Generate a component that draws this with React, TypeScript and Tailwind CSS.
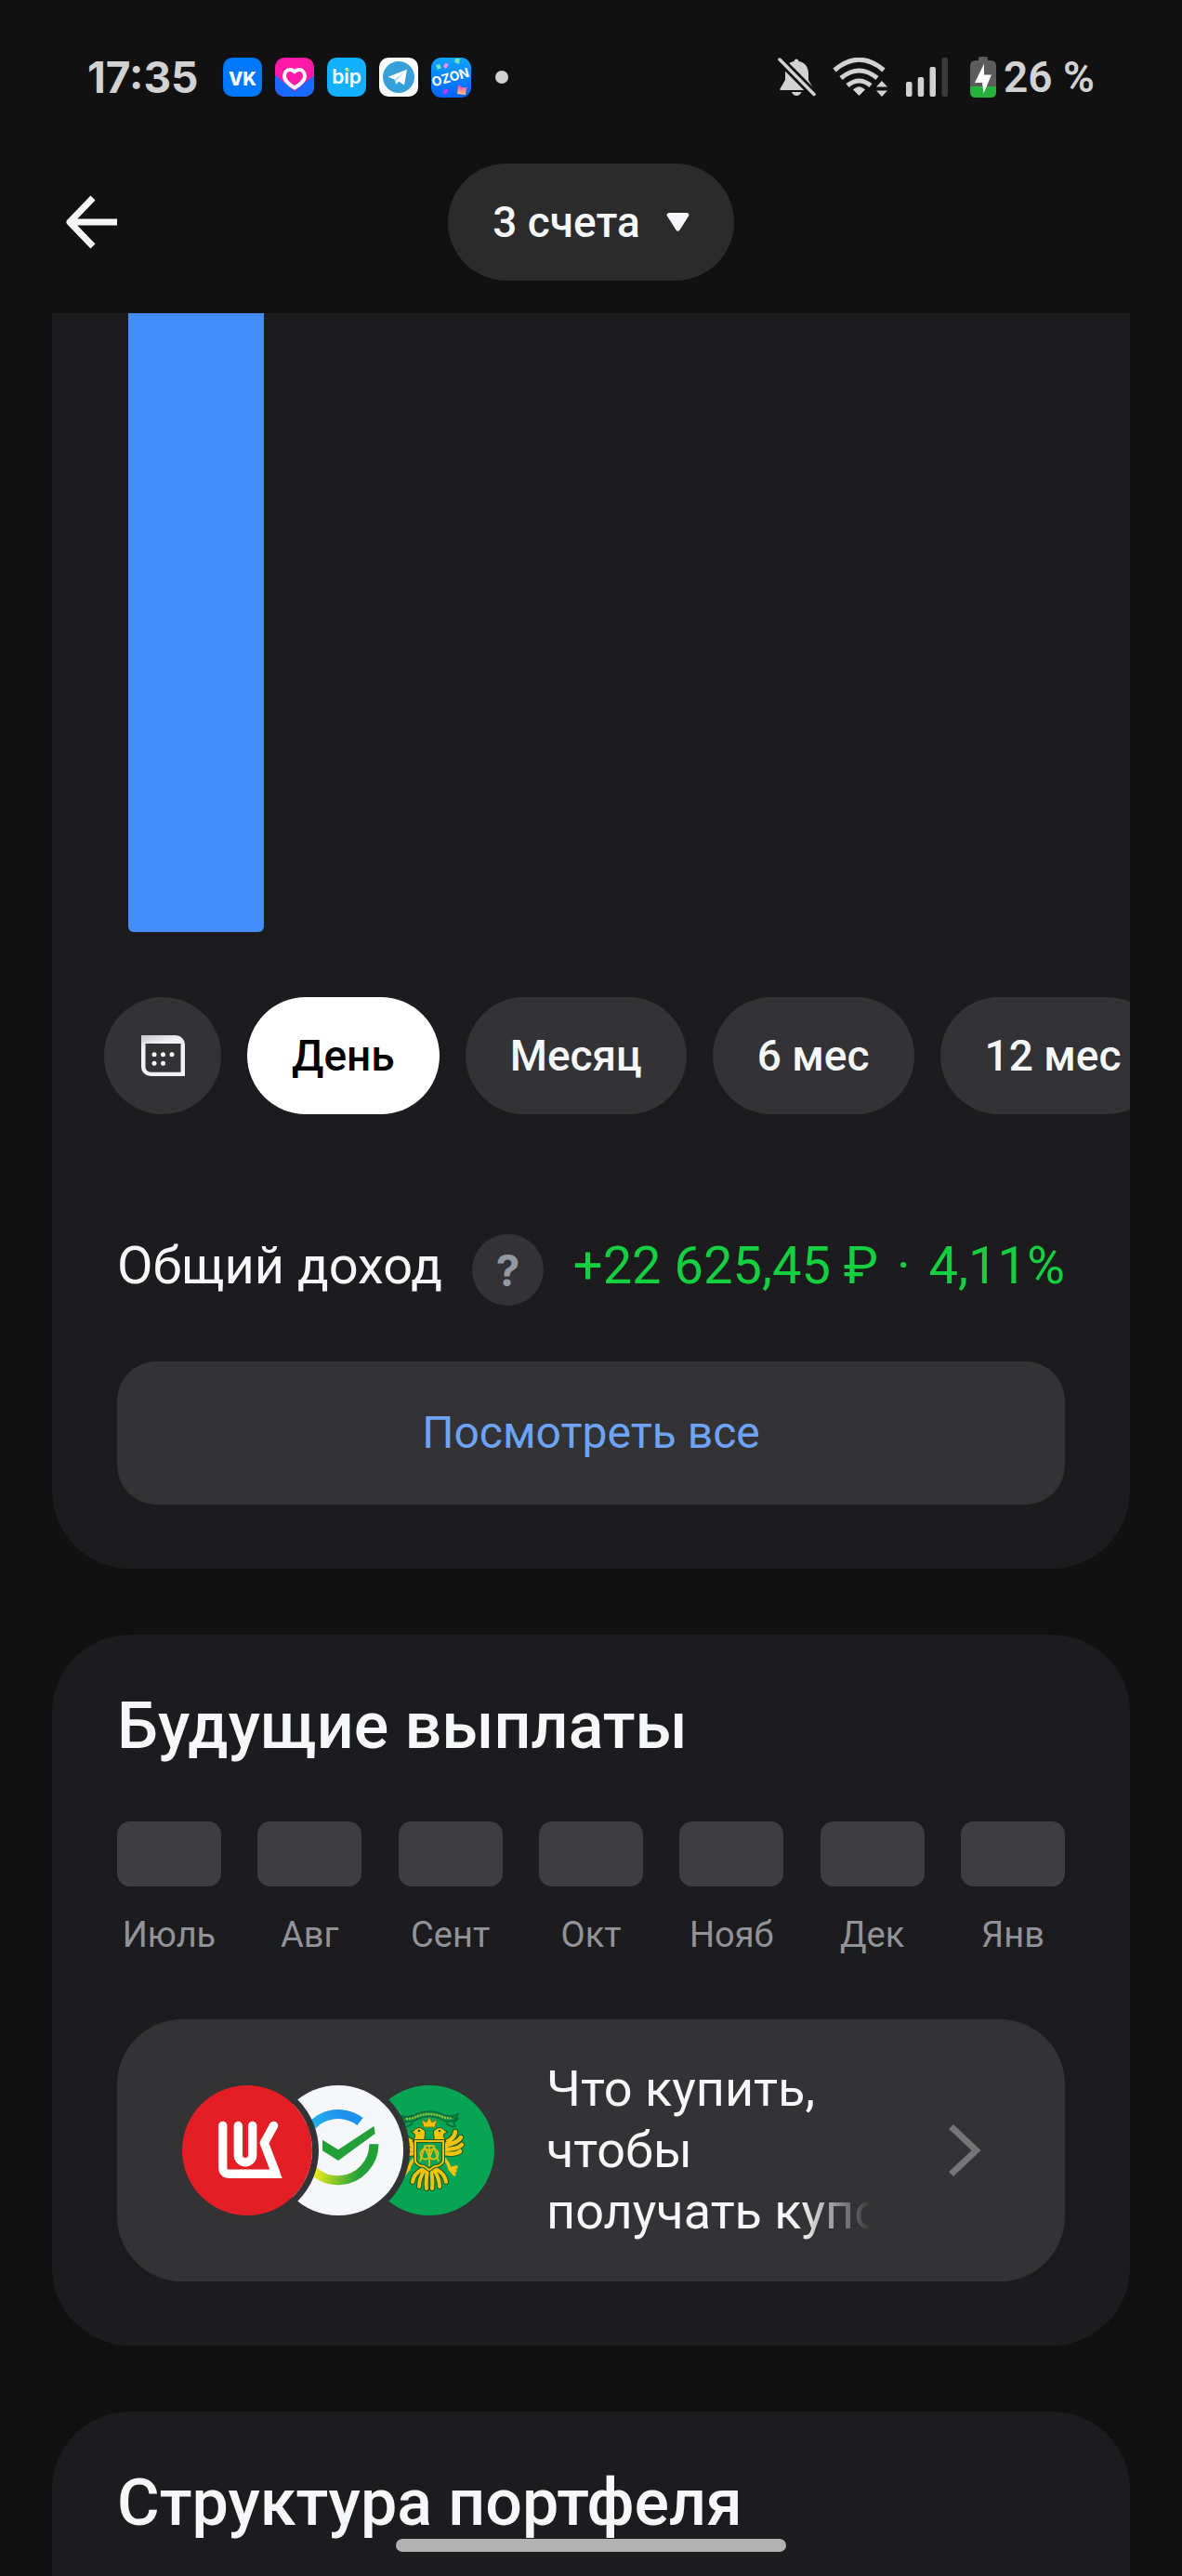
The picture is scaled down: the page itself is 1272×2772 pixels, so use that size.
import React from 'react';

const periods = ['День', 'Месяц', '6 мес', '12 мес'];

const months = ['Июль', 'Авг', 'Сент', 'Окт', 'Нояб', 'Дек', 'Янв'];

/* Notification icons of the status bar */
function AppIcons() {
  return (
    <div className="flex items-center gap-3.5">
      <svg className="size-[42px]" viewBox="0 0 42 42" aria-label="VK">
        <rect width="42" height="42" rx="10" fill="#0077ff" />
        <text
          x="21"
          y="30"
          textAnchor="middle"
          fill="#fff"
          fontFamily="Inter, sans-serif"
          fontWeight="800"
          fontSize="20"
        >
          VK
        </text>
      </svg>
      <svg className="size-[42px]" viewBox="0 0 42 42" aria-hidden="true">
        <rect width="42" height="42" rx="10" fill="#ff1ba8" />
        <path d="M0 19 L21 36 L42 19 V32 a10 10 0 0 1 -10 10 H10 a10 10 0 0 1 -10 -10 Z" fill="#1769ff" />
        <path
          d="M21 32.5 C16 29.5 10 25.5 10 20 C10 15.5 13 13 16.3 13 C18.3 13 19.8 13.8 21 15.3 C22.2 13.8 23.7 13 25.7 13 C29 13 32 15.5 32 20 C32 25.5 26 29.5 21 32.5 Z"
          fill="#ff1ba8"
          stroke="#fff"
          strokeWidth="4"
          strokeLinejoin="round"
        />
      </svg>
      <svg className="size-[42px]" viewBox="0 0 42 42" aria-label="bip">
        <rect width="42" height="42" rx="10" fill="#12b0ff" />
        <text
          x="21"
          y="28"
          textAnchor="middle"
          fill="#fff"
          fontFamily="Inter, sans-serif"
          fontWeight="600"
          fontSize="21"
        >
          bip
        </text>
        <circle cx="22" cy="13.500" r="1.800" fill="#b8dc50" />
      </svg>
      <svg className="size-[42px]" viewBox="0 0 42 42" aria-hidden="true">
        <rect width="42" height="42" rx="10" fill="#fff" />
        <circle cx="21" cy="21" r="17" fill="#37a0d8" />
        <path d="M9.500 20.800 L30 12.800 L27 29.500 L21 25.500 L18.500 29 L16.500 23.500 Z" fill="#fff" />
        <path d="M16.500 23.500 L27 15.500 L18.800 24.800 L18.500 29 Z" fill="#b9d8ea" />
      </svg>
      <svg className="size-[43px]" viewBox="0 0 43 43" aria-label="OZON">
        <defs>
          <linearGradient id="ozon-bg" x1="0" y1="0" x2="0" y2="1">
            <stop offset="0" stopColor="#10a5ff" />
            <stop offset="1" stopColor="#0062ff" />
          </linearGradient>
          <linearGradient id="ozon-cube" x1="0" y1="0" x2="0" y2="1">
            <stop offset="0" stopColor="#ff35b0" />
            <stop offset="1" stopColor="#ffcf80" />
          </linearGradient>
        </defs>
        <rect width="43" height="43" rx="11" fill="url(#ozon-bg)" />
        <path d="M5 8 l4 -1 l2 4 l-4 2 Z M26 1 l5 0 l-1 6 l-5 -2 Z" fill="#6fe6b4" />
        <path d="M15 6 l4 1 l-3 5 l-3 -2 Z" fill="#ff8be0" />
        <path d="M14 34 l5 0 l-3 6 l-4 -2 Z" fill="#b43cff" />
        <path d="M29 29 l4 3 l5 0 l-1 8 l-9 -1 Z" fill="url(#ozon-cube)" />
        <text
          x="21"
          y="26"
          transform="rotate(-16 21 22)"
          textAnchor="middle"
          fill="#fff"
          fontFamily="Inter, sans-serif"
          fontWeight="700"
          fontSize="14"
        >
          OZON
        </text>
      </svg>
    </div>
  );
}

function StatusBar() {
  return (
    <div className="flex h-[166px] shrink-0 items-center justify-between px-[94px] text-[46px] leading-none text-[#d2d2d2]">
      <div className="flex items-center gap-[26px]">
        <span className="font-['Inter',sans-serif] font-bold">17:35</span>
        <AppIcons />
        <span className="size-3.5 rounded-full bg-[#d2d2d2]" />
      </div>

      <div className="flex items-center">
        <svg className="mr-[18px] h-[42px] w-[41px]" viewBox="0 0 41 42" fill="currentColor" aria-hidden="true">
          <path d="M20 1.500 C21.500 1.500 22.300 2.500 22.500 4 C29 5 33 10 33 17 V24 L38.500 33.500 V35 H2.500 V33.500 L8 24 V15 C8 8 12 5 17.500 4 C17.800 2.500 18.500 1.500 20 1.500 Z" />
          <path d="M15 37 H25.500 C24.500 39.500 22.500 41 20.200 41 C18 41 16 39.500 15 37 Z" />
          <path d="M2 2 L39 39.500" stroke="#111" strokeWidth="9" />
          <path d="M2 2 L39 39.500" stroke="currentColor" strokeWidth="3.500" strokeLinecap="round" />
        </svg>
        <svg className="mr-5 h-[42px] w-[59px]" viewBox="0 0 59 42" fill="none" stroke="currentColor" aria-hidden="true">
          <path d="M2 13.500 Q28.500 -9 55 13.500" strokeWidth="5" />
          <path d="M9 22 Q28.500 6 48 22" strokeWidth="5" />
          <path d="M16 30 Q28.500 20 41 30" strokeWidth="5" />
          <path d="M22.500 34.500 Q28.500 29 34.500 34.500 L28.500 40.500 Z" fill="currentColor" strokeWidth="1" />
          <path d="M47 31.500 L53 25 L59 31.500 Z M47 35.500 H59 L53 42 Z" fill="currentColor" stroke="none" />
        </svg>
        <svg className="mr-6 h-[42px] w-[45px]" viewBox="0 0 45 42" fill="currentColor" aria-hidden="true">
          <rect x="0" y="26" width="6.500" height="16" rx="2" />
          <rect x="12.700" y="21" width="6.500" height="21" rx="2" />
          <rect x="25.500" y="10" width="6.500" height="32" rx="2" />
          <rect x="38.500" y="0" width="6.500" height="42" rx="2" fill="#3a3a3a" />
        </svg>
        <svg className="mr-2 h-11 w-7" viewBox="0 0 28 44" aria-hidden="true">
          <path d="M9 4 V2 Q9 0 11 0 H17 Q19 0 19 2 V4 H22 Q28 4 28 10 V32 H0 V10 Q0 4 6 4 Z" fill="#5c5c5c" />
          <path d="M0 32 H28 V38 Q28 44 22 44 H6 Q0 44 0 38 Z" fill="#27b03a" />
          <path d="M15 7.500 L5 28 H13 L14.500 39.500 L23 19.500 H15 Z" fill="#fff" />
        </svg>
        <span className="font-semibold">26 %</span>
      </div>
    </div>
  );
}

function CalendarIcon() {
  return (
    <svg className="h-11 w-[47px]" viewBox="0 0 47 44" aria-hidden="true">
      <defs>
        <linearGradient id="calendar" x1="0" y1="0" x2="0.300" y2="1">
          <stop offset="0" stopColor="#c4c4c8" />
          <stop offset="0.300" stopColor="#f2f2f4" />
        </linearGradient>
      </defs>
      <path
        fillRule="evenodd"
        fill="url(#calendar)"
        d="M0 0 H37 A10 10 0 0 1 47 10 V44 H10 A10 10 0 0 1 0 34 Z M4.500 9 V34 A5.500 5.500 0 0 0 10 39.700 H42.500 V9 Z"
      />
      <g fill="#f6f7f8">
        <circle cx="14" cy="20.700" r="2.500" />
        <circle cx="23.500" cy="20.700" r="2.500" />
        <circle cx="33" cy="20.700" r="2.500" />
        <circle cx="14" cy="30.300" r="2.500" />
        <circle cx="23.500" cy="30.300" r="2.500" />
      </g>
    </svg>
  );
}

function LukoilLogo() {
  return (
    <svg className="size-full" viewBox="0 0 140 140" aria-hidden="true">
      <circle cx="70" cy="70" r="70" fill="#e31e24" />
      <g fill="none" stroke="#fff" strokeWidth="9.400">
        <path d="M43.700 43.500 V88 Q43.700 95.300 51 95.300 H102" />
        <path d="M60.300 43.500 V75 a7.700 7.700 0 0 0 15.400 0 V43.500" strokeLinecap="round" />
        <path d="M98.500 43.500 L88.300 62 L101 95" strokeLinejoin="round" />
      </g>
      <g fill="#fff">
        <circle cx="43.700" cy="43.500" r="4.700" />
        <circle cx="98.500" cy="43.500" r="4.700" />
        <path d="M96 88 H103 L107.700 100 H94 Z" />
      </g>
    </svg>
  );
}

function SberLogo() {
  return (
    <svg className="size-full" viewBox="0 0 140 140" aria-hidden="true">
      <defs>
        <linearGradient id="sber-blue" gradientUnits="userSpaceOnUse" x1="31" y1="60" x2="75" y2="30">
          <stop offset="0" stopColor="#28c4e8" />
          <stop offset="1" stopColor="#1d91ee" />
        </linearGradient>
        <linearGradient id="sber-green" gradientUnits="userSpaceOnUse" x1="45" y1="100" x2="90" y2="108">
          <stop offset="0" stopColor="#e6ea1c" />
          <stop offset="1" stopColor="#22a038" />
        </linearGradient>
      </defs>
      <circle cx="70" cy="70" r="70" fill="#f6f7fa" />
      <g fill="none" strokeWidth="10">
        <path d="M31 70 A39 39 0 0 1 93.500 38.900" stroke="url(#sber-blue)" />
        <path d="M108.400 63.200 A39 39 0 0 1 31 70" stroke="url(#sber-green)" />
      </g>
      <path d="M108.300 44 L109.700 52 L70 81 L53 70.300 V58.700 L70 69.300 Z" fill="#22a038" />
    </svg>
  );
}

/* One half of the eagle; the other half is its mirror image */
function EagleHalf() {
  return (
    <>
      <g stroke="#1c5a20" strokeWidth="6.500" strokeLinecap="round" fill="none">
        <path d="M86 62 Q97 58 98 50 M86 65 Q101 62 104 56 M86 69 Q100 69 105 64 M86 73 Q98 75 103 71" />
      </g>
      <g stroke="#f2c30c" strokeWidth="4.500" strokeLinecap="round" fill="none">
        <path d="M86 62 Q97 58 98 50 M86 65 Q101 62 104 56 M86 69 Q100 69 105 64 M86 73 Q98 75 103 71" />
        <path d="M86 79 Q91 84 92 90 M92 90 L98 92 M92 90 L97 96 M92 90 L99 88" strokeWidth="3.500" />
      </g>
      <path
        d="M75 55 Q73 49 77 47 Q82 43 87 49 L90 50 L86 52 Q84 55 87 58 L88 61 H75 Z"
        fill="#f2c30c"
        stroke="#1c5a20"
        strokeWidth="1"
      />
      <circle cx="81" cy="49" r="1.200" fill="#1c5a20" />
      <g stroke="#1c5a20" strokeWidth="6" strokeLinecap="round" fill="none">
        <path d="M72 92 Q74 103 73 111 M75 91 Q81 100 81 109 M77 90 Q87 95 88 104" />
      </g>
      <g stroke="#f2c30c" strokeWidth="4" strokeLinecap="round" fill="none">
        <path d="M72 92 Q74 103 73 111 M75 91 Q81 100 81 109 M77 90 Q87 95 88 104" />
      </g>
      <path d="M88 32 L101 36 L96 40 L98 44 Q92 46 88 40" fill="none" stroke="#0b6a3a" strokeWidth="1.600" />
    </>
  );
}

function MinfinLogo() {
  return (
    <svg className="size-full" viewBox="0 0 140 140" aria-hidden="true">
      <circle cx="70" cy="70" r="70" fill="#07a454" />
      <path
        d="M40 33 Q50 36 56 31 Q70 25 84 31 Q90 35 101 31 L98 37 Q88 41 82 36 Q70 31 58 36 Q50 41 42 38 Z"
        fill="#0a9a4c"
        stroke="#0b6a3a"
        strokeWidth="1.600"
      />
      <path d="M45 36 Q52 36 58 33 Q70 29 82 33 Q88 36 95 35" fill="none" stroke="#a6bf2a" strokeWidth="2" strokeDasharray="2 1" />
      <EagleHalf />
      <g transform="matrix(-1 0 0 1 140 0)">
        <EagleHalf />
      </g>
      <path d="M64 45 L62 37 L67 40 L70 34 L73 40 L78 37 L76 45 Z" fill="#f2c30c" stroke="#7b7a10" strokeWidth="1" />
      <path d="M55 60 H85 V82 Q82 87 76 87 L70 91 L64 87 Q58 87 55 82 Z" fill="#07a454" stroke="#1c5a20" strokeWidth="4" />
      <path d="M55 60 H85 V82 Q82 87 76 87 L70 91 L64 87 Q58 87 55 82 Z" fill="none" stroke="#f2c30c" strokeWidth="2" />
      <g fill="none" stroke="#d9bd12" strokeWidth="1.800">
        <ellipse cx="65.500" cy="74" rx="5" ry="5.500" />
        <ellipse cx="74.500" cy="74" rx="5" ry="5.500" />
        <path d="M70 65 V87 M60 82 L65 66 L70 78 L75 66 L80 82 M66 65 H74" />
      </g>
    </svg>
  );
}

export default function App() {
  return (
    <div className="relative flex h-screen flex-col overflow-hidden bg-[#111111] font-['Roboto','Noto_Sans',sans-serif] text-[#f6f7f8]">
      <StatusBar />

      {/* Navigation */}
      <header className="grid shrink-0 grid-cols-[1fr_auto_1fr] items-center px-[70px] pt-2.5 pb-[35px]">
        <button type="button" aria-label="Назад" className="w-14">
          <svg className="h-[58px] w-14" viewBox="0 0 56 58" fill="none" stroke="currentColor" strokeWidth="7" aria-hidden="true">
            <path d="M56 29 H6 M30 3 L5 29 L30 55" strokeLinejoin="round" />
          </svg>
        </button>
        <button
          type="button"
          className="flex h-[126px] items-center gap-7 rounded-full bg-[#2b2b2b] px-12 text-[46px] font-medium"
        >
          3 счета
          <svg className="h-5 w-[25px]" viewBox="0 0 25 20" fill="currentColor" aria-hidden="true">
            <path d="M3 0 H22 Q25.500 0.500 24 3.500 L14.500 18.500 Q12.500 21 10.500 18.500 L1 3.500 Q-0.500 0.500 3 0 Z" />
          </svg>
        </button>
      </header>

      <main className="flex flex-col gap-[71px] px-14">
        {/* Income chart */}
        <section className="shrink-0 overflow-hidden rounded-b-[84px] bg-[#1c1c1e] pb-[69px]">
          <div className="flex pl-[82px]">
            <div className="h-[666px] w-[146px] rounded-b-md bg-[#448dfb]" />
          </div>

          <div className="mt-[70px] flex gap-7 pl-14">
            <button
              type="button"
              aria-label="Выбрать даты"
              className="flex size-[126px] shrink-0 items-center justify-center rounded-full bg-[#333335]"
            >
              <CalendarIcon />
            </button>
            {periods.map((period, index) => (
              <button
                key={period}
                type="button"
                className={`h-[126px] shrink-0 rounded-full px-12 text-[46px] font-medium ${
                  index === 0 ? 'bg-white text-black' : 'bg-[#333335]'
                }`}
              >
                {period}
              </button>
            ))}
          </div>

          <div className="mt-[129px] flex items-center justify-between px-[70px] text-[56px] leading-[66px]">
            <div className="flex items-center gap-8">
              <span className="pb-2.5">Общий доход</span>
              <button
                type="button"
                aria-label="Подробнее о доходе"
                className="flex size-[77px] items-center justify-center rounded-full bg-[#333335] font-['Inter',sans-serif] text-[46px] font-bold text-[#9299a2]"
              >
                ?
              </button>
            </div>
            <div className="flex gap-5 pb-2.5 whitespace-nowrap text-[#14cf40]">
              <span>+22 625,45 ₽</span>
              <span>·</span>
              <span>4,11%</span>
            </div>
          </div>

          <div className="mt-[60px] px-[70px]">
            <button
              type="button"
              className="h-[154px] w-full rounded-[42px] bg-[#333335] text-[48px] text-[#6ea4f8]"
            >
              Посмотреть все
            </button>
          </div>
        </section>

        {/* Future payouts */}
        <section className="shrink-0 rounded-[84px] bg-[#1c1c1e] px-[70px] pt-14 pb-[69px]">
          <h2 className="text-[70px] leading-[84px] font-medium">Будущие выплаты</h2>

          <ul className="mt-[61px] flex justify-between">
            {months.map((month) => (
              <li key={month} className="flex w-28 flex-col items-center">
                <span className="h-[70px] w-full rounded-[14px] bg-[#3e3e40]" />
                <span className="mt-7 text-[38px] leading-[48px] text-[#929299]">{month}</span>
              </li>
            ))}
          </ul>

          <a href="#coupons" className="mt-[67px] flex h-[282px] items-center rounded-[70px] bg-[#333335] pr-[90px] pl-[70px]">
            <div className="flex shrink-0">
              <div className="z-20 size-[140px] rounded-full ring-7 ring-[#333335]">
                <LukoilLogo />
              </div>
              <div className="z-10 -ml-[42px] size-[140px] rounded-full ring-7 ring-[#333335]">
                <SberLogo />
              </div>
              <div className="-ml-[42px] size-[140px]">
                <MinfinLogo />
              </div>
            </div>

            <p className="ml-14 w-[350px] overflow-hidden text-[54px] leading-[66px]">
              Что купить, чтобы{' '}
              <span className="block [mask-image:linear-gradient(to_right,black_78%,transparent)] whitespace-nowrap">
                получать купоны
              </span>
            </p>

            <svg className="ml-auto h-14 w-[35px]" viewBox="0 0 35 56" fill="none" stroke="#757577" strokeWidth="7" aria-hidden="true">
              <path d="M2.500 2.500 L29.500 28 L2.500 53.500" />
            </svg>
          </a>
        </section>

        {/* Portfolio structure */}
        <section className="h-[400px] shrink-0 rounded-t-[84px] bg-[#1c1c1e] px-[70px] pt-14">
          <h2 className="text-[70px] leading-[84px] font-medium">Структура портфеля</h2>
        </section>
      </main>

      {/* System gesture bar */}
      <div className="absolute bottom-[26px] left-1/2 h-3.5 w-[420px] -translate-x-1/2 rounded-full bg-[#b2b2b2]" />
    </div>
  );
}
